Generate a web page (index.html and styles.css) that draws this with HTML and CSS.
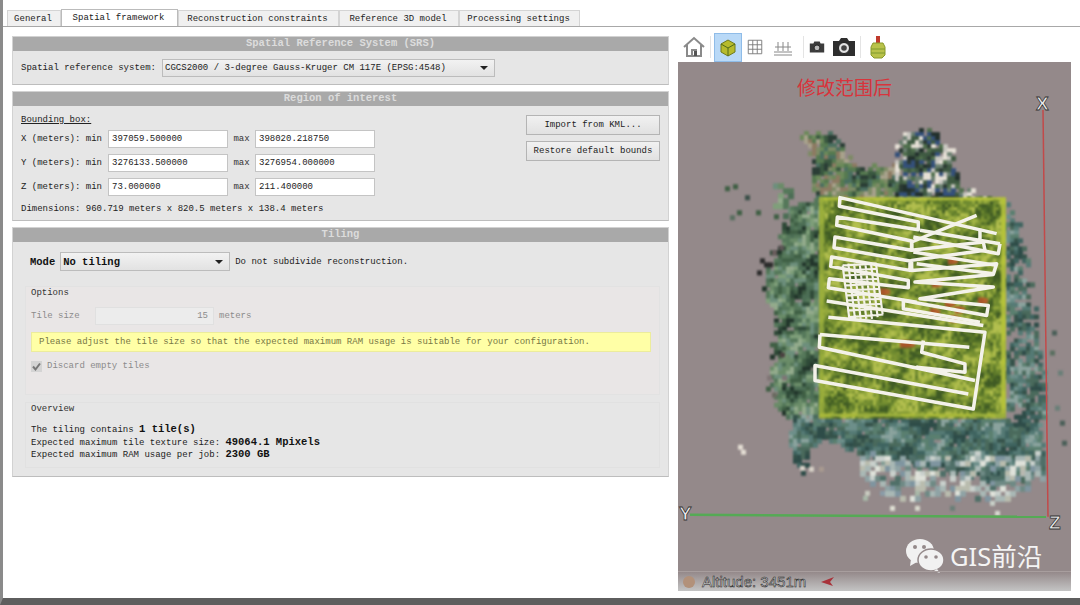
FILE: index.html
```html
<!DOCTYPE html>
<html lang="en">
<head>
<meta charset="utf-8">
<title>Spatial framework</title>
<link rel="stylesheet" href="styles.css">
</head>
<body>
<div class="app">
  <nav class="tabs">
    <div class="tab">General</div>
    <div class="tab active">Spatial framework</div>
    <div class="tab">Reconstruction constraints</div>
    <div class="tab">Reference 3D model</div>
    <div class="tab">Processing settings</div>
  </nav>
  <div class="main">
    <div class="forms">
      <section class="panel srs">
        <h2 class="panel-title">Spatial Reference System (SRS)</h2>
        <div class="srs-row">
          <span>Spatial reference system:</span>
          <div class="select select-srs"><span>CGCS2000 / 3-degree Gauss-Kruger CM 117E (EPSG:4548)</span><i class="caret"></i></div>
        </div>
      </section>
      <section class="panel roi">
        <h2 class="panel-title">Region of interest</h2>
        <div class="roi-body">
          <div class="roi-fields">
            <div class="bbox-title">Bounding box:</div>
            <div class="bbox-row"><span class="bbox-label">X (meters): min</span><span class="field">397059.500000</span><span class="bbox-max">max</span><span class="field">398020.218750</span></div>
            <div class="bbox-row"><span class="bbox-label">Y (meters): min</span><span class="field">3276133.500000</span><span class="bbox-max">max</span><span class="field">3276954.000000</span></div>
            <div class="bbox-row"><span class="bbox-label">Z (meters): min</span><span class="field">73.000000</span><span class="bbox-max">max</span><span class="field">211.400000</span></div>
            <div class="dimensions">Dimensions: 960.719 meters x 820.5 meters x 138.4 meters</div>
          </div>
          <div class="roi-buttons">
            <div class="button">Import from KML...</div>
            <div class="button">Restore default bounds</div>
          </div>
        </div>
      </section>
      <section class="panel tiling">
        <h2 class="panel-title">Tiling</h2>
        <div class="mode-row">
          <b>Mode</b>
          <div class="select select-mode"><b>No tiling</b><i class="caret"></i></div>
          <span>Do not subdivide reconstruction.</span>
        </div>
        <div class="group options">
          <div class="group-label">Options</div>
          <div class="tile-row"><span>Tile size</span><span class="field tile-field">15</span><span>meters</span></div>
          <div class="notice">Please adjust the tile size so that the expected maximum RAM usage is suitable for your configuration.</div>
          <div class="discard"><span class="checkbox"><svg viewBox="0 0 11 11" width="11" height="11"><path d="M2 5.5 4.5 8.5 9 2.5" fill="none" stroke="#777" stroke-width="2"/></svg></span><span>Discard empty tiles</span></div>
        </div>
        <div class="group overview">
          <div class="group-label">Overview</div>
          <div class="overview-text">
            <div>The tiling contains <b>1 tile(s)</b></div>
            <div>Expected maximum tile texture size: <b>49064.1 Mpixels</b></div>
            <div>Expected maximum RAM usage per job: <b>2300 GB</b></div>
          </div>
        </div>
      </section>
    </div>
    <div class="viewer">
      <div class="toolbar">
        <svg class="tool" viewBox="0 0 24 24" width="24" height="24"><path d="M2 12 12 3 22 12M5 10V21H19V10M10 21V15H14V21" fill="none" stroke="#8a8a8a" stroke-width="2"/><rect x="12" y="16" width="3" height="5" fill="#555"/></svg>
        <i class="sep"></i>
        <div class="tool-on"><svg viewBox="0 0 20 20" width="20" height="20"><path d="M10 2 17 6V14L10 18 3 14V6Z" fill="#b7bb2c" stroke="#6f7a1c"/><path d="M3 6 10 10 17 6M10 10V18" fill="none" stroke="#4f6a18"/></svg></div>
        <svg class="tool" viewBox="0 0 20 20" width="18" height="18"><path d="M2.5 2.5H17.5V17.5H2.5ZM7.5 2.5V17.5M12.5 2.5V17.5M2.5 7.5H17.5M2.5 12.5H17.5" fill="none" stroke="#777"/></svg>
        <svg class="tool ruler" viewBox="0 0 20 20" width="20" height="20"><path d="M1 15H19M1 18H19M5 5V14M10 5V14M15 5V14M2 10H18" fill="none" stroke="#888"/></svg>
        <i class="sep"></i>
        <svg class="tool" viewBox="0 0 20 20" width="18" height="18"><path d="M2 6H6L7 4H13L14 6H18V16H2Z" fill="#3c3c3c"/><circle cx="10" cy="11" r="3.2" fill="#bbb" stroke="#222"/></svg>
        <svg class="tool" viewBox="0 0 24 24" width="24" height="24"><path d="M1 6H7L9 3H15L17 6H23V21H1Z" fill="#2e2e2e"/><circle cx="12" cy="13" r="5.5" fill="#e4e4e4" stroke="#222"/><circle cx="12" cy="13" r="2.8" fill="#444"/></svg>
        <i class="sep"></i>
        <svg class="tool object" viewBox="0 0 16 24" width="16" height="24"><rect x="6" y="1" width="4" height="7" fill="#c03a2c"/><path d="M3 8H13L15 12V20L12 23H4L1 20V12Z" fill="#b9c24a" stroke="#8a9a2a"/><path d="M1 14H15M1 18H15" stroke="#7f9a2e"/></svg>
      </div>
      <div class="scene">
        <svg class="cloud" id="cloud" viewBox="678 62 393 528" preserveAspectRatio="none">
          <g id="points" class="soft"></g>
          <g id="patch" class="soft"></g>
          <g class="lines" transform="translate(780 170) scale(.3333)">
            <path d="M650 190 180 82 178 108 415 155 415 178 172 140 170 165 395 212 395 240 165 200 162 232 390 272 390 300 155 260 152 288 385 330 385 352 148 325 145 352 410 395"/>
            <path d="M140 392 610 465M145 440 615 485 580 715 105 630 105 585 565 670"/>
            <path d="M120 492 568 530M120 492 118 530 585 630M430 510 425 545 555 580 555 605 410 590 585 630"/>
            <path d="M590 135 395 215 395 240 610 215 615 240 395 270 395 300 650 280 640 312 405 335 640 350 420 385 625 405 620 435 370 390 370 415 600 455"/>
            <path d="M660 220 655 250 400 200M650 285 400 245M640 310 410 280M600 175 600 215M420 180 660 220"/>
            <path class="fine" d="M188 285 290 280M190 300 292 295M192 315 294 310M194 330 296 325M196 345 298 340M198 360 300 355M200 375 302 370M202 390 304 385M204 405 306 400M206 420 308 415M208 440 310 432M188 285 208 445M205 280 225 445M222 280 242 445M239 280 259 445M256 280 276 445M273 280 293 440M288 280 308 432"/>
          </g>
          <path class="axis-x" d="M1043 110 1048 516"/>
          <path class="axis-y" d="M690 514 1046 516"/>
        </svg>
        <div class="scene-title">修改范围后</div>
        <span class="axis-label axis-label-x">X</span>
        <span class="axis-label axis-label-y">Y</span>
        <span class="axis-label axis-label-z">Z</span>
        <div class="watermark">
          <svg viewBox="0 0 40 36" width="40" height="36"><ellipse cx="15" cy="13" rx="14" ry="12" fill="#f1f1f1"/><path d="M6 21 5 28 12 24Z" fill="#f1f1f1"/><ellipse cx="26" cy="22" rx="13" ry="11" fill="#f1f1f1" stroke="#94898a" stroke-width="1.5"/><path d="M32 31 35 35 29 33Z" fill="#f1f1f1"/><circle cx="10" cy="9" r="2" fill="#94898a"/><circle cx="19" cy="9" r="2" fill="#94898a"/><circle cx="21" cy="19" r="1.8" fill="#94898a"/><circle cx="31" cy="19" r="1.8" fill="#94898a"/></svg>
          <span>GIS前沿</span>
        </div>
        <div class="status">
          <i class="status-dot"></i>
          <span class="altitude">Altitude: 3451m</span>
          <svg viewBox="0 0 14 10" width="14" height="10"><path d="M0 5 13 0 9 5 12 9Z" fill="#a8323a"/></svg>
        </div>
      </div>
    </div>
  </div>
</div>
<script src="script.js"></script>
</body>
</html>
```
FILE: styles.css
```css
* { box-sizing: border-box; }
html, body { margin: 0; height: 100%; }
body {
  background: #fff;
  color: #222;
  font: 9px/12px "Liberation Mono", "DejaVu Sans Mono", monospace;
  overflow: hidden;
}
b { font-size: 10.5px; font-weight: 700; color: #111; }
.app {
  width: 1080px;
  height: 605px;
  display: flex;
  flex-direction: column;
  border-left: 3px solid #8a8a8a;
  border-bottom: 7px solid #5e5e5e;
  padding-top: 10px;
}
.tabs {
  height: 17px;
  display: grid;
  grid-template-columns: 54px 117px 161px 120px 121px;
  padding-left: 4px;
  border-bottom: 1px solid #a8a8a8;
  flex: none;
}
.tab {
  height: 16px;
  background: #f0f0f0;
  border: 1px solid #d4d4d4;
  border-bottom: 0;
  padding-right: 2px;
  text-align: center;
  line-height: 16px;
  white-space: nowrap;
}
.tab.active {
  background: #fff;
  height: 17px;
  margin-top: -1px;
  padding-bottom: 1px;
  border-color: #bbb;
  position: relative;
}
.main { flex: 1; display: flex; min-height: 0; }
.forms {
  width: 666px;
  padding: 9px 0 0 9px;
  display: flex;
  flex-direction: column;
  gap: 6px;
  flex: none;
}
.panel {
  background: #e6e6e6;
  border: 1px solid #d2d2d2;
  border-bottom-color: #bdbdbd;
}
.panel-title {
  margin: 0;
  height: 14px;
  background: #a9a9a9;
  color: #dcdcdc;
  font: 700 10.5px/13px "Liberation Mono", monospace;
  text-align: center;
}
.srs { height: 49px; }
.srs-row { display: flex; align-items: center; gap: 6px; padding: 8px 0 0 8px; }
.select {
  display: flex;
  align-items: center;
  justify-content: space-between;
  height: 18px;
  padding: 0 6px 0 2px;
  background: linear-gradient(#f2f2f2, #e2e2e2);
  border: 1px solid #bcbcbc;
  white-space: nowrap;
}
.select-srs { width: 333px; }
.select-mode { width: 170px; height: 19px; }
.caret {
  width: 0;
  height: 0;
  border: 4px solid transparent;
  border-top: 4px solid #222;
  border-bottom: 0;
}
.roi { height: 130px; }
.roi-body { display: flex; justify-content: space-between; padding: 9px 8px 0 8px; }
.bbox-title { text-decoration: underline; height: 15px; line-height: 11px; }
.bbox-row { display: flex; align-items: center; height: 18px; margin-bottom: 6px; }
.bbox-label { width: 87px; }
.bbox-max { width: 27px; text-align: center; color: #333; }
.field {
  display: block;
  width: 120px;
  height: 18px;
  background: #fff;
  border: 1px solid #c4c4c4;
  padding: 0 3px;
  line-height: 16px;
  white-space: nowrap;
}
.dimensions { margin-top: 7px; }
.roi-buttons { display: flex; flex-direction: column; gap: 6px; }
.button {
  width: 134px;
  height: 20px;
  background: linear-gradient(#f1f1f1, #e1e1e1);
  border: 1px solid #b4b4b4;
  text-align: center;
  line-height: 18px;
  white-space: nowrap;
}
.tiling { height: 250px; }
.mode-row { display: flex; align-items: center; padding: 10px 0 0 17px; gap: 5px; }
.group { margin: 0 8px 0 12px; background: #e9e6e6; }
.group-label { height: 13px; line-height: 11px; padding-left: 5px; color: #333; }
.options { margin-top: 15px; height: 109px; border: 1px solid #e2e2e2; padding-top: 1px; }
.tile-row { display: flex; align-items: center; gap: 5px; padding: 6px 0 0 5px; color: #8b8b8b; }
.tile-row > span:first-child { width: 59px; }
.tile-field {
  width: 119px;
  background: #ececec;
  border-color: #e0e0e0;
  text-align: right;
  padding-right: 5px;
}
.notice {
  margin: 7px 8px 0 5px;
  height: 20px;
  background: #ffffa6;
  border: 1px solid #ecec9c;
  padding-left: 7px;
  line-height: 18px;
  color: #777744;
  white-space: nowrap;
}
.discard { display: flex; align-items: center; gap: 5px; padding: 8px 0 0 5px; color: #8b8b8b; }
.checkbox { width: 11px; height: 11px; background: #d4d4d4; display: block; line-height: 0; }
.overview { margin-top: 7px; height: 66px; background: #e6e6e6; border: 1px solid #e1e1e1; padding-top: 1px; }
.overview-text { padding: 6px 0 0 5px; }
.overview-text div { height: 12.5px; white-space: nowrap; }
.viewer { width: 393px; margin-left: 9px; display: flex; flex-direction: column; padding-top: 6px; padding-bottom: 7px; }
.toolbar { height: 29px; display: flex; align-items: center; gap: 6px; padding: 0 0 1px 4px; flex: none; }
.sep { width: 1px; height: 22px; background: #e4e4e4; margin: 0 -2px; }
.tool { flex: none; display: block; }
.tool-on {
  width: 28px;
  height: 29px;
  margin: 1px -2px 0 -1px;
  background: #b9d9f7;
  border: 1px solid #8fbce8;
  display: flex;
  align-items: center;
  justify-content: center;
}
.ruler { margin: 0 6px 0 3px; }
.object { margin-left: 5px; }
.scene { position: relative; flex: 1; background: #94898a; overflow: hidden; min-height: 0; }
.cloud { position: absolute; inset: 0; width: 100%; height: 100%; }
.soft { filter: blur(1px); }
.lines path { fill: none; stroke: #f4f2ea; stroke-width: 10.5; stroke-linejoin: round; }
.lines .fine { stroke-width: 6.5; }
.axis-x { fill: none; stroke: #c24a4a; stroke-width: 1.5; }
.axis-y { fill: none; stroke: #55aa55; stroke-width: 2.5; }
.scene-title {
  position: absolute;
  left: 119px;
  top: 14px;
  font: 19px/22px "Noto Sans CJK SC", "Liberation Sans", sans-serif;
  color: #d8343c;
}
.axis-label {
  position: absolute;
  font: 700 19px/19px "Liberation Sans", sans-serif;
  color: #eee;
  -webkit-text-stroke: .8px #333;
}
.axis-label-x { left: 358px; top: 32px; }
.axis-label-y { left: 1px; top: 442px; }
.axis-label-z { left: 371px; top: 451px; }
.watermark {
  position: absolute;
  left: 227px;
  top: 476px;
  display: flex;
  align-items: center;
  gap: 5px;
  color: #f4f4f4;
  font: 25.5px/36px "Noto Sans", "Noto Sans CJK SC", sans-serif;
}
.status {
  position: absolute;
  left: 0;
  right: 0;
  bottom: 0;
  height: 20px;
  background: linear-gradient(rgba(150,140,140,0), #c4c4c4);
  border-top: 1px solid #a89e9e;
  display: flex;
  align-items: center;
  padding-left: 5px;
  gap: 7px;
}
.status-dot { width: 12px; height: 12px; border-radius: 50%; background: #b2917a; }
.altitude {
  font: 15px/18px "Liberation Sans", sans-serif;
  color: #c8c8c8;
  -webkit-text-stroke: .5px #222;
  margin-right: 8px;
}
```
FILE: script.js
```js
// Seeded point cloud: the reconstruction preview is a mosaic of coloured squares.
(function () {
  var NS = 'http://www.w3.org/2000/svg';
  var seed = 4711;
  function r() { seed = (seed * 16807) % 2147483647; return seed / 2147483647; }
  function noise(x, y) {
    return (Math.sin(x * .13 + y * .07) + Math.sin(y * .19 - x * .05 + 1.7) + Math.sin((x + y) * .31 + .6) * .7) / 2.7;
  }
  function shade(cols, x, y, spread) {
    var t = .5 + .5 * noise(x, y) + (r() - .5) * spread;
    t = Math.max(0, Math.min(.999, t));
    return cols[Math.floor(t * cols.length)];
  }
  function add(g, x, y, s, c) {
    var e = document.createElementNS(NS, 'rect');
    e.setAttribute('x', x); e.setAttribute('y', y);
    e.setAttribute('width', s); e.setAttribute('height', s);
    e.setAttribute('fill', c);
    g.appendChild(e);
  }
  function inside(poly, x, y) {
    var c = false;
    for (var i = 0, j = poly.length - 1; i < poly.length; j = i++) {
      var a = poly[i], b = poly[j];
      if ((a[1] > y) !== (b[1] > y) && x < (b[0] - a[0]) * (y - a[1]) / (b[1] - a[1]) + a[0]) c = !c;
    }
    return c;
  }
  function fill(g, poly, cell, keep, cols, spread, jitter) {
    var xs = poly.map(function (p) { return p[0]; }), ys = poly.map(function (p) { return p[1]; });
    var x0 = Math.min.apply(0, xs), x1 = Math.max.apply(0, xs), y0 = Math.min.apply(0, ys), y1 = Math.max.apply(0, ys);
    for (var y = y0; y < y1; y += cell) {
      for (var x = x0; x < x1; x += cell) {
        var jx = (r() - .5) * jitter, jy = (r() - .5) * jitter;
        if (inside(poly, x + jx, y + jy) && r() < keep) add(g, x, y, cell + 1, shade(cols, x, y, spread));
      }
    }
  }
  // Palettes run from dark to light so that neighbouring cells stay close in tone.
  var green = ['#22352b', '#2f4a38', '#3f5f44', '#4c6e55', '#55785a', '#6a8c68', '#6d8f7c', '#7f9f7a', '#93ab8c'];
  var teal = ['#2e4c48', '#35524a', '#3f6460', '#4a6a5c', '#557a75', '#5a7f6f', '#6d8f8a', '#8ba39e'];
  var pale = ['#4f6f68', '#6f8a85', '#7f95a0', '#8fa3a5', '#a9b8b5', '#b9bcae', '#c9d0cc', '#dfe2da'];
  var top = ['#2a3d35', '#3a5840', '#4a6f60', '#567a50', '#6c8a5a', '#7e8b66', '#8d7a62', '#a8a28c'];
  var town = ['#22302c', '#2b3a33', '#34507a', '#3f5a42', '#4f6f4c', '#6a7f70', '#c8c6c0', '#e6e0d6'];
  var g = document.getElementById('points');
  fill(g, [[800,131],[838,132],[845,150],[860,165],[900,165],[900,200],[820,200],[808,180],[812,160]], 4, .93, top, .55, 7);
  fill(g, [[895,140],[905,130],[925,128],[950,150],[956,185],[990,195],[992,202],[895,202]], 4, .94, town, .7, 7);
  fill(g, [[768,178],[790,178],[792,205],[782,215],[770,205]], 5, .55, green, .5, 6);
  fill(g, [[786,210],[800,198],[822,198],[822,416],[790,418],[770,395],[772,340],[776,320],[762,290],[772,250]], 4, .96, green, .55, 9);
  fill(g, [[785,414],[1005,414],[1040,430],[1044,470],[1000,480],[960,470],[880,462],[860,448],[835,440],[815,435],[805,455],[800,470],[790,450]], 4, .96, teal, .55, 9);
  fill(g, [[855,455],[1042,450],[1040,475],[1000,498],[960,495],[890,495],[865,480]], 5, .6, pale, .6, 10);
  fill(g, [[1002,198],[1020,230],[1028,300],[1043,360],[1046,420],[1040,440],[1002,416]], 4, .74, teal, .6, 10);
  [[733,184],[757,270,'#2b2b2b'],[725,186],[737,210],[756,210],[774,214],[760,258,'#2b2b2b'],[764,262,'#2b2b2b'],[768,262,'#2b2b2b'],[772,250,'#6a5d5d'],[779,245,'#5c5454'],[780,352,'#4a4040'],[767,375,'#7f7575'],[782,375,'#7f7575'],[772,392,'#6a6a60'],
   [738,444,'#e4ded4'],[741,449,'#e4ded4'],[800,465,'#d8d2c8'],[809,466,'#d8d2c8'],[819,466,'#a89a90'],[865,490,'#c9cbc0'],[863,495,'#a8b8a8'],[880,490,'#8a9ca8'],[890,505,'#e0e0d4'],[915,490,'#a8b8a8'],[915,505,'#d8d8cc'],[950,505,'#6a7f78'],[990,500,'#c8d0c8'],[995,510,'#d8d8d0'],[1020,470,'#b8b8b0'],[1055,405,'#6a7f78'],[1060,420,'#4a5f58'],[1062,440,'#4a5f58'],[1058,370,'#6a7f78'],[1050,350,'#5a6f60'],[1052,330,'#4a5f58'],[745,195,'#3a4f48'],[730,215,'#5a6f60']
  ].forEach(function (q) { add(g, q[0], q[1], 5, q[2] || '#3f5f44'); });
  // ground patch of the region of interest
  var p = document.getElementById('patch');
  var field = ['#3f5a24', '#4e6b26', '#5e7a2a', '#6f8a30', '#7d9433', '#93a83c', '#a4b545', '#b3bf4f'];
  fill(p, [[819,198],[1004,198],[1004,415],[819,415]], 3, 1, field, .7, 0);
  fill(p, [[1001,198],[1004,198],[1004,415],[1001,415]], 2, 1, ['#a9b93a', '#b4c23a'], 0, 0);
  fill(p, [[819,197],[1004,197],[1004,199],[819,199]], 2, 1, ['#a9b93a', '#b4c23a'], 0, 0);
  fill(p, [[819,198],[822,198],[822,415],[819,415]], 2, 1, ['#8ea43a', '#9aae3c'], 0, 0);
  fill(p, [[819,413],[1004,413],[1004,415],[819,415]], 2, 1, ['#9aae3c', '#a9b93a'], 0, 0);
  [[880,288],[900,340],[945,300],[978,297],[930,308],[955,306],[948,257],[950,315],[932,280],[905,340]].forEach(function (q) {
    add(p, q[0], q[1], 7, '#a8562a'); add(p, q[0] + 5, q[1] + 1, 5, '#b4602c');
  });
})();
```
